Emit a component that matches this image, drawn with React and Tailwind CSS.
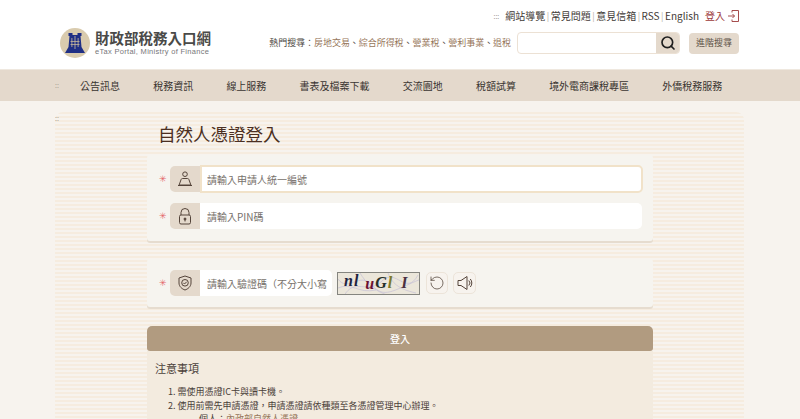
import React from "react";
import { Search, RotateCcw } from "lucide-react";

const navItems = [
  "公告訊息",
  "稅務資訊",
  "線上服務",
  "書表及檔案下載",
  "交流園地",
  "稅額試算",
  "境外電商課稅專區",
  "外僑稅務服務",
];

const cjk = "font-['Noto_Sans_CJK_TC','Noto_Sans',sans-serif]";

function Logo() {
  return (
    <svg width="30" height="30" viewBox="0 0 30 30">
      <circle cx="15" cy="15" r="15" fill="#d9cbae" />
      <path
        d="M8.500 5h4v2h5V5h4v3h-1l1 11 3.500 6H5l3.500-6 1-11h-1z"
        fill="#1f2f85"
      />
      <path d="M11.500 10h.8v9h-.8zM14.600 8h.8v13h-.8zM17.700 10h.8v9h-.8zM10.500 13h9v.7h-9zM10.500 16h9v.7h-9z" fill="#cdbd9c" />
    </svg>
  );
}

function UserIcon() {
  return (
    <svg width="16" height="16" viewBox="0 0 16 16" fill="none" stroke="#54443a" strokeWidth="1">
      <circle cx="8" cy="3.200" r="2.300" />
      <path d="M5.500 7.500h5a1.500 1.500 0 0 1 1.400 1l2 5.500H2.100l2-5.500a1.500 1.500 0 0 1 1.400-1z" />
      <path d="M1 14.500h14" />
    </svg>
  );
}

function LockIcon() {
  return (
    <svg width="14" height="17" viewBox="0 0 14 17" fill="none" stroke="#54443a" strokeWidth="1">
      <path d="M3 7V4.500a4 4 0 0 1 8 0V7" />
      <rect x="1.500" y="7" width="11" height="9" rx="1.500" />
      <circle cx="7" cy="11" r="1" fill="#54443a" />
      <path d="M7 11.500v2" />
    </svg>
  );
}

function ShieldIcon() {
  return (
    <svg width="14" height="16" viewBox="0 0 14 16" fill="none" stroke="#54443a" strokeWidth="1">
      <path d="M7 1 13 3v5c0 3.500-3 6-6 7-3-1-6-3.500-6-7V3z" />
      <circle cx="7" cy="7.800" r="3.300" />
      <path d="m5.300 7.800 1.200 1.200 2.200-2.200" />
    </svg>
  );
}

function SpeakerIcon() {
  return (
    <svg width="16" height="16" viewBox="0 0 16 16" fill="none" stroke="#54443a" strokeWidth="1">
      <path d="M1 5.500h3L10 1.500v13l-6-4H1z" />
      <path d="M11.800 5.500a3.500 3.500 0 0 1 0 5M13.300 4a6 6 0 0 1 0 8" />
    </svg>
  );
}

function LoginIcon() {
  return (
    <svg width="11" height="12" viewBox="0 0 11 12" fill="none" stroke="#9c3a3a" strokeWidth="0.9">
      <path d="M4 .5h6.500v11H4M4 .5v2M4 11.500v-2M0 6h6.500M4.500 4l2 2-2 2" />
    </svg>
  );
}

function Captcha() {
  return (
    <div className="relative w-[83px] h-[23px] border border-[#85857f] bg-[#ebe6da] overflow-hidden">
      <svg className="absolute inset-0" width="83" height="23" fill="none" stroke="#c6c0d6" strokeWidth="0.7">
        <path d="M0 6C10 20 22-2 34 12s20 6 49-6" />
        <path d="M6 23C16 4 30 22 44 8s24 16 36-6" />
        <path d="M22 0c6 10 14 18 30 23M50 0c4 10 10 16 28 20M0 15c14-6 20 6 38 2" />
      </svg>
      <div className="relative h-full flex items-center pl-[6px] font-['Liberation_Serif',serif] italic font-bold text-[16px] leading-none whitespace-nowrap">
        <span className="text-[#1d2240] tracking-[1px] -translate-y-[2px]">nl</span>
        <span className="text-[#6b1030] ml-[6px] translate-y-[1px]">u</span>
        <span className="text-[#27302a] ml-[1px]">G</span>
        <span className="text-[#7d7a2a] ml-[1px]">l</span>
        <span className="text-[#4a3040] ml-[9px]">I</span>
      </div>
    </div>
  );
}

function Field({ icon, placeholder, focused, wide }) {
  const size = wide ? "w-[132px]" : focused ? "w-[443px]" : "w-[442px]";
  return (
    <div className="flex items-center">
      <span className="w-[23px] pl-[12px] text-[#e4686c] text-[9px] leading-none font-['DejaVu_Sans',sans-serif]">
        ✳
      </span>
      <div className="w-[30px] h-[26px] bg-[#e4d9cc] rounded-l-[5px] flex items-center justify-center">
        {icon}
      </div>
      <input
        readOnly
        placeholder={placeholder}
        className={`bg-white rounded-r-[5px] text-[10px] outline-none placeholder:text-[#77716b] [text-spacing-trim:space-all] ${size} ${
          focused
            ? "h-[28px] pl-[5px] pr-[5px] border-2 border-[#f1e2c9]"
            : "h-[26px] pl-[7px] pr-[5px]"
        }`}
      />
    </div>
  );
}

function Sep() {
  return <span className="mx-[1.500px] text-[#b8b0a6] text-[9px]">|</span>;
}

export default function App() {
  return (
    <div className={`w-[800px] h-[419px] overflow-hidden bg-[#f7f3ee] ${cjk}`}>
      <header className="h-[69px] bg-white pl-[60px] pr-[61px] flex justify-between">
        <div className="flex items-center gap-[5px] pt-[16px]">
          <Logo />
          <div>
            <div className="text-[14.500px] leading-[18px] font-bold text-[#4a4a48] whitespace-nowrap">
              財政部稅務入口網
            </div>
            <div className="text-[7.500px] leading-[10px] text-[#77777a] font-['Liberation_Sans',sans-serif] tracking-[0.300px] whitespace-nowrap">
              eTax Portal, Ministry of Finance
            </div>
          </div>
        </div>
        <div className="flex flex-col items-end pt-[9px]">
          <div className="flex items-center h-[14px] text-[10px] text-[#3f3a36] leading-none whitespace-nowrap">
            <span className="text-[7px] text-[#9a948c] mr-[6px]">:::</span>
            <span>網站導覽</span>
            <Sep />
            <span>常見問題</span>
            <Sep />
            <span>意見信箱</span>
            <Sep />
            <span>RSS</span>
            <Sep />
            <span>English</span>
            <span className="ml-[6px] mr-[3px] text-[#9c3a3a]">登入</span>
            <LoginIcon />
          </div>
          <div className="flex items-center mt-[9px] whitespace-nowrap">
            <div className="text-[9px] tracking-[-0.050px] text-[#4d4843]">
              熱門搜尋：
              <span className="text-[#96765a]">房地交易</span>、
              <span className="text-[#96765a]">綜合所得稅</span>、
              <span className="text-[#96765a]">營業稅</span>、
              <span className="text-[#96765a]">營利事業</span>、
              <span className="text-[#96765a]">退稅</span>
            </div>
            <div className="ml-[6px] w-[163px] h-[22px] flex rounded-[4px] border border-[#ece1d4] overflow-hidden bg-white">
              <div className="flex-1" />
              <div className="w-[23px] bg-[#e4d9cc] flex items-center justify-center">
                <Search size={16} strokeWidth={2.500} color="#1f1f1f" />
              </div>
            </div>
            <div className="ml-[9px] w-[50px] h-[21px] rounded-[4px] bg-[#e4d9cc] flex items-center justify-center text-[9px] text-[#5c5147]">
              進階搜尋
            </div>
          </div>
        </div>
      </header>

      <nav className="h-[32px] bg-[#e4d9cc] border-t border-[#efe8df] flex items-center pl-[55px] text-[10px] text-[#3a3531] whitespace-nowrap">
        <span className="w-[25px] text-[7px] text-[#a39a8e] leading-none">::</span>
        <div className="flex gap-[33.200px]">
          {navItems.map((item) => (
            <span key={item}>{item}</span>
          ))}
        </div>
      </nav>

      <main className="mt-[11px] ml-[55px] w-[689px] h-[320px] rounded-t-[8px] bg-[repeating-linear-gradient(180deg,#f6ecdf_0px,#f6ecdf_2px,#f7f3ee_2px,#f7f3ee_4px)] pl-[92px]">
        <div className="relative h-0">
          <span className="absolute left-[-92px] top-[3px] text-[7px] leading-none text-[#a39a8e]">::</span>
        </div>
        <h1 className="pt-[10px] pl-[11px] text-[17.500px] leading-[24px] text-[#4b2f22] whitespace-nowrap">
          自然人憑證登入
        </h1>
        <div className="w-[506px] mt-[9px]">
          <section className="h-[86px] bg-[#f6f4ef] rounded-[3px] shadow-[0_2px_0_#e6dccf] pt-[10px] flex flex-col gap-[10px]">
            <Field icon={<UserIcon />} placeholder="請輸入申請人統一編號" focused />
            <Field icon={<LockIcon />} placeholder="請輸入PIN碼" />
          </section>

          <section className="mt-[18px] h-[48px] bg-[#f6f4ef] rounded-[3px] shadow-[0_2px_0_#e6dccf] flex items-center">
            <Field icon={<ShieldIcon />} placeholder="請輸入驗證碼（不分大小寫）" wide />
            <div className="ml-[5px]">
              <Captcha />
            </div>
            <button className="ml-[6px] w-[22px] h-[22px] rounded-[5px] bg-[#f7f3ee] border border-[#ece4d9] flex items-center justify-center">
              <RotateCcw size={16} strokeWidth={1.100} color="#4a3d32" />
            </button>
            <button className="ml-[5px] w-[23px] h-[22px] rounded-[5px] bg-[#f7f3ee] border border-[#ece4d9] flex items-center justify-center">
              <SpeakerIcon />
            </button>
          </section>

          <button className="mt-[19px] w-full h-[25px] rounded-t-[5px] rounded-b-[3px] bg-[#b19b80] text-white text-[10px] font-medium block">
            登入
          </button>

          <section className="bg-[#f3ebdf] px-[8px] pt-[8px] h-[80px] text-[#4a4039]">
            <h2 className="text-[11px] leading-[18px]">注意事項</h2>
            <ol className="mt-[8px] pl-[13px] text-[9px] leading-[13.500px]">
              <li>1. 需使用憑證IC卡與讀卡機。</li>
              <li>2. 使用前需先申請憑證，申請憑證請依種類至各憑證管理中心辦理。</li>
              <li className="pl-[31px]">
                個人：<span className="text-[#96765a]">內政部自然人憑證</span>
              </li>
            </ol>
          </section>
        </div>
      </main>
    </div>
  );
}
